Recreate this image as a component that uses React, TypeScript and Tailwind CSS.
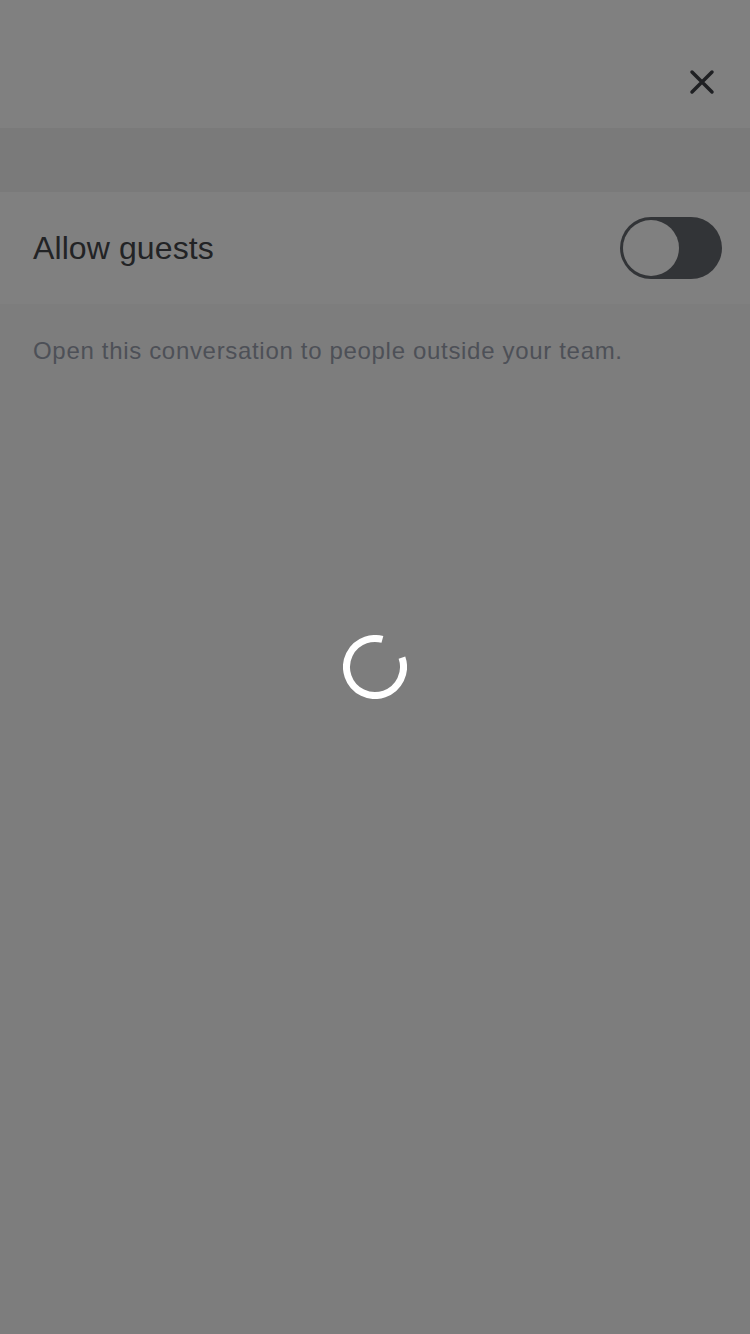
export default function App() {
	return (
		<div className="relative w-[750px] h-[1334px] bg-[#7d7d7d] overflow-hidden" style={{ fontFamily: '"Liberation Sans", Arial, sans-serif' }}>
			{/* шапка */}
			<div className="h-[128px] bg-[#808080] flex items-start justify-end pt-[68px] pr-[34px]">
				<CloseIcon />
			</div>

			{/* отступ секции */}
			<div className="h-[64px] bg-[#7a7a7a]" />

			{/* строка с переключателем */}
			<div className="h-[112px] bg-[#808080] flex items-center justify-between pl-[33px] pr-[28px]">
				<span className="text-[32px] text-[#222325] font-light tracking-[0.1px]">Allow guests</span>
				<Toggle />
			</div>

			<p className="pl-[33px] pt-[29px] text-[24px] text-[#4d5057] tracking-[0.68px]">
				Open this conversation to people outside your team.
			</p>

			{/* спиннер поверх контента */}
			<div className="absolute left-[343px] top-[635px]">
				<Spinner />
			</div>
		</div>
	);
}

function CloseIcon() {
	return (
		<svg width="28" height="28" viewBox="0 0 28 28">
			<path d="M4 4 L24 24 M24 4 L4 24" stroke="#1f2023" strokeWidth="3.5" strokeLinecap="round" fill="none" />
		</svg>
	);
}

function Toggle() {
	return (
		<div className="w-[102px] h-[62px] rounded-full bg-[#323437] p-[3px] flex items-center">
			<div className="w-[56px] h-[56px] rounded-full bg-[#808080]" />
		</div>
	);
}

function Spinner() {
	// разрыв дуги справа сверху
	return (
		<svg width="64" height="64" viewBox="0 0 64 64">
			<circle
				cx="32"
				cy="32"
				r="28.5"
				fill="none"
				stroke="#ffffff"
				strokeWidth="7"
				strokeDasharray="151 28"
				transform="rotate(-19 32 32)"
			/>
		</svg>
	);
}
